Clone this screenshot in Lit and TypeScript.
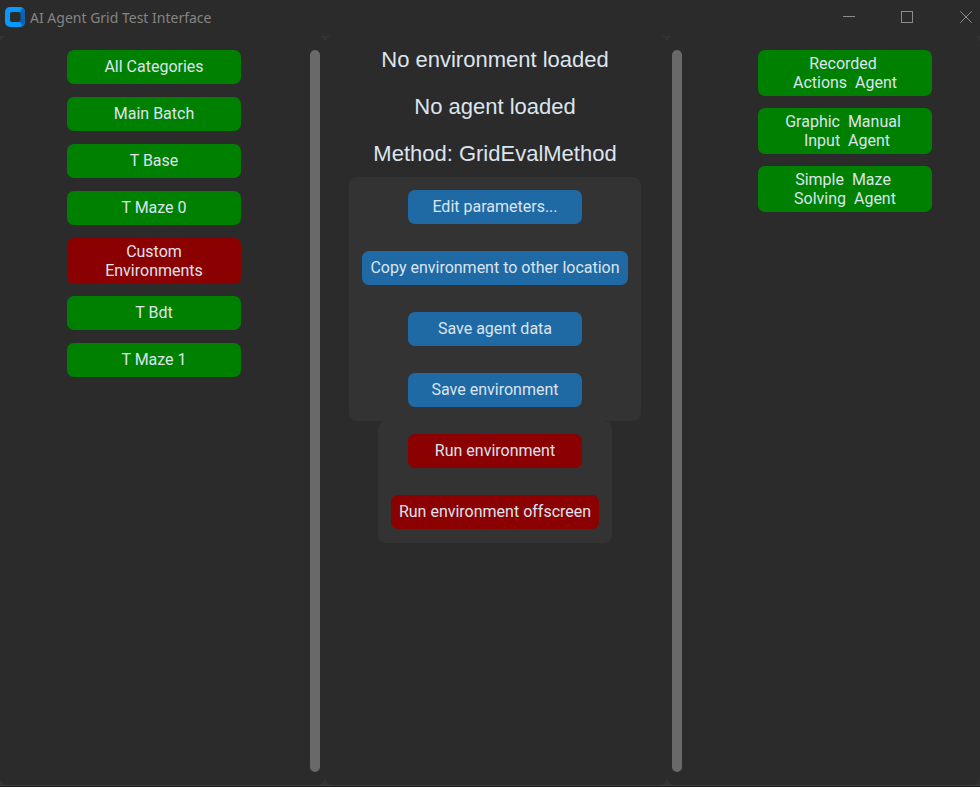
import { LitElement, html, css } from "lit";
import { customElement, state } from "lit/decorators.js";
import { classMap } from "lit/directives/class-map.js";

interface Choice {
  label: string;
  tone: "green" | "red" | "blue";
}

const CATEGORIES: Choice[] = [
  { label: "All Categories", tone: "green" },
  { label: "Main Batch", tone: "green" },
  { label: "T Base", tone: "green" },
  { label: "T Maze 0", tone: "green" },
  { label: "Custom\nEnvironments", tone: "red" },
  { label: "T Bdt", tone: "green" },
  { label: "T Maze 1", tone: "green" },
];

const AGENTS: Choice[] = [
  { label: "Recorded \nActions  Agent", tone: "green" },
  { label: "Graphic  Manual \n Input  Agent", tone: "green" },
  { label: "Simple  Maze \nSolving  Agent", tone: "green" },
];

const EDIT_ACTIONS: Choice[] = [
  { label: "Edit parameters...", tone: "blue" },
  { label: "Copy environment to other location", tone: "blue" },
  { label: "Save agent data", tone: "blue" },
  { label: "Save environment", tone: "blue" },
];

const RUN_ACTIONS: Choice[] = [
  { label: "Run environment", tone: "red" },
  { label: "Run environment offscreen", tone: "red" },
];

@customElement("app-root")
export class AppRoot extends LitElement {
  @state() private status = [
    "No environment loaded",
    "No agent loaded",
    "Method: GridEvalMethod",
  ];

  static styles = css`
    :host {
      display: flex;
      flex-direction: column;
      min-height: 100vh;
      box-sizing: border-box;
      background: #333333;
      border-bottom: 1px solid #1c1c1c;
      color: #dce4ee;
      font-family: Roboto, sans-serif;
    }
    .titlebar {
      display: flex;
      align-items: center;
      height: 36px;
      padding: 0 0 2px 5px;
      box-sizing: border-box;
      background: #2b2b2b;
      color: #858585;
    }
    .logo {
      width: 20px;
      height: 20px;
    }
    .title {
      flex: 1;
      margin: 0 0 0 5px;
      font: 400 14px/22px "Noto Sans", sans-serif;
      padding-top: 2px;
    }
    .window-button {
      display: flex;
      align-items: center;
      justify-content: center;
      width: 58px;
      height: 34px;
      padding: 0;
      border: 0;
      background: none;
      color: #8c8c8c;
    }
    .window-button.close {
      width: 44px;
      padding-left: 16px;
    }
    .columns {
      flex: 1;
      display: grid;
      grid-template-columns: 325fr 342fr 313fr;
      border-bottom: 1px solid #3c3c3c;
    }
    .panel {
      display: flex;
      background: #2b2b2b;
      border-radius: 8px;
    }
    .side {
      padding: 14px 5px 13px;
    }
    .list {
      flex: 1;
      display: flex;
      flex-direction: column;
      align-items: center;
      gap: 13px;
      padding-right: 2px;
    }
    .list.agents {
      padding: 0 0 0 33px;
    }
    .categories {
      padding-left: 0;
    }
    .track {
      width: 10px;
      border-radius: 5px;
      background: #696969;
    }
    .center {
      flex-direction: column;
      align-items: center;
      padding-right: 2px;
    }
    .status {
      margin: 0;
      font: 400 22px/47px "Liberation Sans", sans-serif;
    }
    .group {
      display: flex;
      flex-direction: column;
      align-items: center;
      gap: 27px;
      padding: 13px 13px 14px;
      border-radius: 8px;
      background: #333333;
    }
    .choice {
      min-width: 174px;
      min-height: 34px;
      padding: 3px 8px 5px;
      border: 0;
      border-radius: 7px;
      color: inherit;
      font: 400 16px/19px Roboto, sans-serif;
      white-space: pre;
      text-align: center;
    }
    .choice.tall {
      padding: 4px 8px;
      margin-bottom: -1px;
    }
    .green {
      background: #008000;
    }
    .red {
      background: #8b0000;
    }
    .blue {
      background: #1f6aa5;
    }
  `;

  private renderChoices(choices: Choice[]) {
    return choices.map(({ label, tone }) => {
      const classes = { choice: true, [tone]: true, tall: label.includes("\n") };
      return html`<button type="button" class=${classMap(classes)}>${label}</button>`;
    });
  }

  render() {
    return html`
      <header class="titlebar">
        <svg class="logo" viewBox="0 0 20 20" aria-hidden="true">
          <rect width="20" height="20" rx="5" fill="#0a99fb" />
          <path d="M15 5L17 1.2Q20 2.4 20 5V15Q20 17.6 17 18.8L15 15Z" fill="#0a62b0" />
          <rect x="5" y="5" width="10.5" height="10" rx="2" fill="#2b2b2b" />
        </svg>
        <h1 class="title">AI Agent Grid Test Interface</h1>
        <button type="button" class="window-button" aria-label="Minimize">
          <svg width="12" height="12" viewBox="0 0 12 12" stroke="currentColor">
            <path d="M0 5.5H12" />
          </svg>
        </button>
        <button type="button" class="window-button" aria-label="Maximize">
          <svg width="12" height="12" viewBox="0 0 12 12" fill="none" stroke="currentColor">
            <rect x="0.5" y="0.5" width="11" height="11" />
          </svg>
        </button>
        <button type="button" class="window-button close" aria-label="Close">
          <svg width="12" height="12" viewBox="0 0 12 12" stroke="currentColor">
            <path d="M0.2 0.2L11.8 11.8M11.8 0.2L0.2 11.8" />
          </svg>
        </button>
      </header>
      <main class="columns">
        <section class="panel side categories" aria-label="Environments">
          <div class="list">${this.renderChoices(CATEGORIES)}</div>
          <div class="track"></div>
        </section>
        <section class="panel center" aria-label="Controls">
          ${this.status.map((line) => html`<p class="status">${line}</p>`)}
          <div class="group">${this.renderChoices(EDIT_ACTIONS)}</div>
          <div class="group">${this.renderChoices(RUN_ACTIONS)}</div>
        </section>
        <section class="panel side" aria-label="Agents">
          <div class="track"></div>
          <div class="list agents">${this.renderChoices(AGENTS)}</div>
        </section>
      </main>
    `;
  }
}
